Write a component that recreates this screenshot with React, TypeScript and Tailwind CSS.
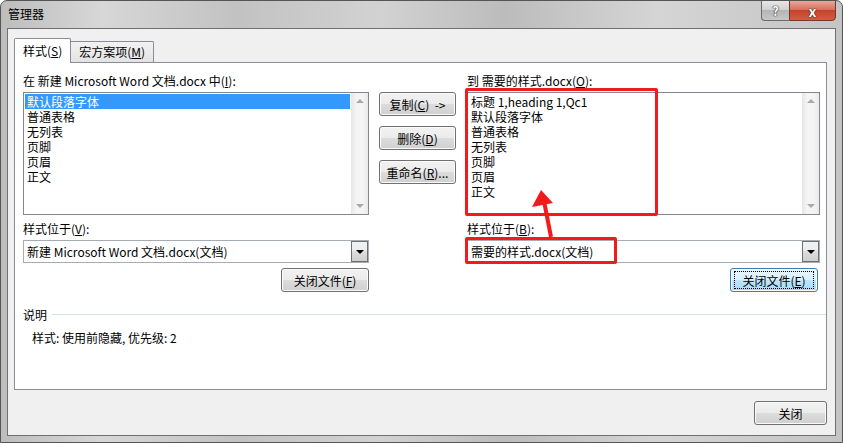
import React from 'react'

const U = ({ c }: { c: string }) => <span className="underline">{c}</span>

function Btn({ children, w, focus }: { children: React.ReactNode; w: string; focus?: boolean }) {
    return (
        <div
            className={`${w} h-[24px] flex items-center justify-center rounded-[3px] border ${
                focus
                    ? 'border-[#3c7fb1] bg-[linear-gradient(#eaf6fd_0%,#d9f0fc_50%,#bee6fd_50%,#a7d9f5_100%)]'
                    : 'border-[#707070] bg-[linear-gradient(#f2f2f2_0%,#ebebeb_50%,#dddddd_50%,#cfcfcf_100%)]'
            } shadow-[inset_0_0_0_1px_#fbfbfb]`}
        >
            {focus ? (
                <span className="flex items-center justify-center w-[calc(100%-6px)] h-[18px] border border-dotted border-black">{children}</span>
            ) : (
                children
            )}
        </div>
    )
}

function ScrollBar() {
    return (
        <div className="w-[17px] h-full flex flex-col justify-between items-center bg-[linear-gradient(90deg,#e6e6e6,#f4f4f4_30%,#f4f4f4_70%,#e9e9e9)] py-[6px]">
            <div className="w-0 h-0 border-l-[4px] border-r-[4px] border-b-[4px] border-l-transparent border-r-transparent border-b-[#a9a9a9]" />
            <div className="w-0 h-0 border-l-[4px] border-r-[4px] border-t-[4px] border-l-transparent border-r-transparent border-t-[#a9a9a9]" />
        </div>
    )
}

function ListBox({ items, selected }: { items: string[]; selected?: number }) {
    return (
        <div className="h-[123px] border border-[#828790] bg-white flex">
            <div className="flex-1 p-[1px] pt-[1px]">
                {items.map((t, i) => (
                    <div key={t} className={`h-[15px] leading-[15px] pl-[2px] ${i === selected ? 'bg-[#3399ff] text-white' : ''}`}>
                        {t}
                    </div>
                ))}
            </div>
            <ScrollBar />
        </div>
    )
}

function Combo({ text }: { text: string }) {
    return (
        <div className="h-[23px] border border-[#a5acb5] bg-white flex items-center">
            <div className="flex-1 pl-[3px]">{text}</div>
            <div className="w-[17px] h-[21px] mr-[0px] border border-[#707070] bg-[linear-gradient(#f2f2f2_0%,#ebebeb_50%,#dddddd_50%,#cfcfcf_100%)] flex items-center justify-center">
                <div className="w-0 h-0 border-l-[4px] border-r-[4px] border-t-[4px] border-l-transparent border-r-transparent border-t-black" />
            </div>
        </div>
    )
}

export default function App() {
    return (
        <div className="relative w-[843px] h-[443px] overflow-hidden rounded-t-[7px] border border-[#555] bg-[linear-gradient(90deg,#bdbdbd_0%,#d7d7d7_12%,#c2c2c2_28%,#d2d2d2_45%,#bcbcbc_60%,#d5d5d5_78%,#c4c4c4_100%)] font-['Noto_Sans_CJK_SC','Microsoft_YaHei',sans-serif] text-[12px] leading-[15px] text-black">
            <div className="h-[27px] flex justify-between">
                <div className="pl-[7px] pt-[5px] text-[12px]">管理器</div>
                <div className="flex mr-[6px] -mt-px h-[21px]">
                    <div className="w-[28px] rounded-bl-[4px] border border-[#6b6b6b] border-r-0 bg-[linear-gradient(#e6e6e6_0%,#cfcfcf_50%,#b5b5b5_50%,#c7c7c7_100%)] flex items-center justify-center font-bold text-white text-[13px] [text-shadow:0_0_1px_#333,0_0_1px_#333,0_0_1px_#333]">
                        ?
                    </div>
                    <div className="w-[47px] rounded-br-[4px] border border-[#6b3b33] bg-[linear-gradient(#e9a99b_0%,#d9705c_45%,#c5432c_50%,#d45c3f_100%)] flex items-center justify-center font-bold text-white text-[14px] leading-none [text-shadow:0_0_1px_#3a1a14,0_0_1px_#3a1a14,0_0_1px_#3a1a14]">
                        x
                    </div>
                </div>
            </div>

            <div className="mx-[6px] h-[408px] border border-[#707070] bg-[#f0f0f0] pt-[9px] pl-[6px] pr-[8px]">
                <div className="flex items-end h-[24px]">
                    <div className="relative z-10 h-[25px] -mb-px px-[8px] pt-[4px] bg-white border border-b-0 border-[#898c95] rounded-t-[2px]">
                        样式(<U c="S" />)
                    </div>
                    <div className="h-[21px] px-[8px] pt-[2px] border border-l-0 border-b-0 border-[#898c95] rounded-tr-[2px] bg-[linear-gradient(#f2f2f2,#e3e3e3)]">
                        宏方案项(<U c="M" />)
                    </div>
                </div>

                <div className="h-[328px] border border-[#898c95] bg-white pl-[8px] pt-[10px]">
                    <div className="flex">
                        <div className="w-[346px] flex flex-col">
                            <div className="h-[15px]">在 新建 Microsoft Word 文档.docx 中(<U c="I" />):</div>
                            <div className="mt-[4px]">
                                <ListBox items={['默认段落字体', '普通表格', '无列表', '页脚', '页眉', '正文']} selected={0} />
                            </div>
                            <div className="mt-[6px] h-[15px]">样式位于(<U c="V" />):</div>
                            <div className="mt-[4px]">
                                <Combo text="新建 Microsoft Word 文档.docx(文档)" />
                            </div>
                            <div className="mt-[5px] flex justify-end">
                                <Btn w="w-[88px]">
                                    关闭文件(<U c="F" />)
                                </Btn>
                            </div>
                        </div>

                        <div className="w-[77px] ml-[10px] mt-[19px] flex flex-col gap-[10px]">
                            <Btn w="w-[77px]">
                                复制(<U c="C" />)&nbsp;&nbsp;-&gt;
                            </Btn>
                            <Btn w="w-[77px]">
                                删除(<U c="D" />)
                            </Btn>
                            <Btn w="w-[77px]">
                                重命名(<U c="R" />)...
                            </Btn>
                        </div>

                        <div className="w-[353px] ml-[11px] flex flex-col">
                            <div className="h-[15px]">到 需要的样式.docx(<U c="O" />):</div>
                            <div className="mt-[4px] relative">
                                <ListBox items={['标题 1,heading 1,Qc1', '默认段落字体', '普通表格', '无列表', '页脚', '页眉', '正文']} />
                                <div className="absolute left-[-2px] top-[-4px] w-[193px] h-[128px] border-[3px] border-[#f21b1b] rounded-[2px]" />
                            </div>
                            <div className="mt-[6px] h-[15px]">样式位于(<U c="B" />):</div>
                            <div className="mt-[4px] relative">
                                <Combo text="需要的样式.docx(文档)" />
                                <div className="absolute left-[-2px] top-[-3px] w-[152px] h-[27px] border-[3px] border-[#f21b1b] rounded-[2px]" />
                            </div>
                            <div className="mt-[5px] flex justify-end pr-[2px]">
                                <Btn w="w-[88px]" focus>
                                    关闭文件(<U c="E" />)
                                </Btn>
                            </div>
                        </div>
                    </div>

                    <div className="mt-[15px] flex items-center pr-[0px]">
                        <span>说明</span>
                        <div className="flex-1 ml-[5px] h-px bg-[#d5dfe5]" />
                    </div>
                    <div className="mt-[8px] pl-[9px]">样式: 使用前隐藏, 优先级: 2</div>
                </div>

                <div className="mt-[11px] flex justify-end pr-[0px]">
                    <Btn w="w-[73px]">关闭</Btn>
                </div>
            </div>

            <svg className="absolute inset-0 pointer-events-none" width="843" height="443">
                <line x1="550" y1="236" x2="543" y2="200" stroke="#f21b1b" strokeWidth="4" />
                <polygon points="540,189 531,206 552,202" fill="#f21b1b" />
            </svg>
        </div>
    )
}
